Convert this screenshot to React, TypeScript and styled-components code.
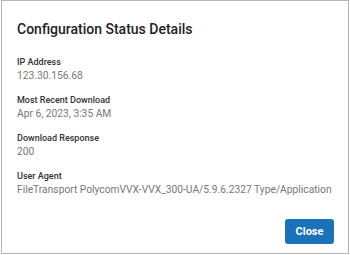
import styled, { createGlobalStyle } from 'styled-components';

const GlobalStyle = createGlobalStyle`
  html, body {
    margin: 0;
    padding: 0;
    background: #ffffff;
  }
  body {
    font-family: Roboto, 'Noto Sans', sans-serif;
  }
`;

const Dialog = styled.div`
  box-sizing: border-box;
  width: 348px;
  height: 254px;
  margin-left: 1px;
  border: 1px solid #b5b5b5;
  background: #ffffff;
  padding: 19px 14px 9px 15px;
  display: flex;
  flex-direction: column;
`;

const Title = styled.h2`
  margin: 0;
  font-size: 14px;
  font-weight: 500;
  color: #222222;
  line-height: 18px;
`;

const FieldList = styled.div`
  display: flex;
  flex-direction: column;
  gap: 11px;
  margin-top: 18px;
`;

const Field = styled.div`
  display: flex;
  flex-direction: column;
`;

const Label = styled.div`
  font-size: 9px;
  font-weight: 500;
  color: #333333;
  line-height: 12px;
`;

const Value = styled.div`
  font-size: 10.25px;
  color: #777777;
  line-height: 15px;
  white-space: nowrap;
`;

const Footer = styled.div`
  margin-top: auto;
  display: flex;
  justify-content: flex-end;
`;

const Button = styled.button`
  width: 49px;
  height: 25px;
  border: none;
  border-radius: 3px;
  background: #1a73b8;
  color: #ffffff;
  font-family: Roboto, sans-serif;
  font-size: 11px;
  font-weight: 700;
  cursor: pointer;
`;

const fields = [
  { label: 'IP Address', value: '123.30.156.68' },
  { label: 'Most Recent Download', value: 'Apr 6, 2023, 3:35 AM' },
  { label: 'Download Response', value: '200' },
  { label: 'User Agent', value: 'FileTransport PolycomVVX-VVX_300-UA/5.9.6.2327 Type/Application' },
];

function App() {
  return (
    <>
      <GlobalStyle />
      <Dialog>
        <Title>Configuration Status Details</Title>
        <FieldList>
          {fields.map(f => (
            <Field key={f.label}>
              <Label>{f.label}</Label>
              <Value>{f.value}</Value>
            </Field>
          ))}
        </FieldList>
        <Footer>
          <Button>Close</Button>
        </Footer>
      </Dialog>
    </>
  );
}

export default App;
